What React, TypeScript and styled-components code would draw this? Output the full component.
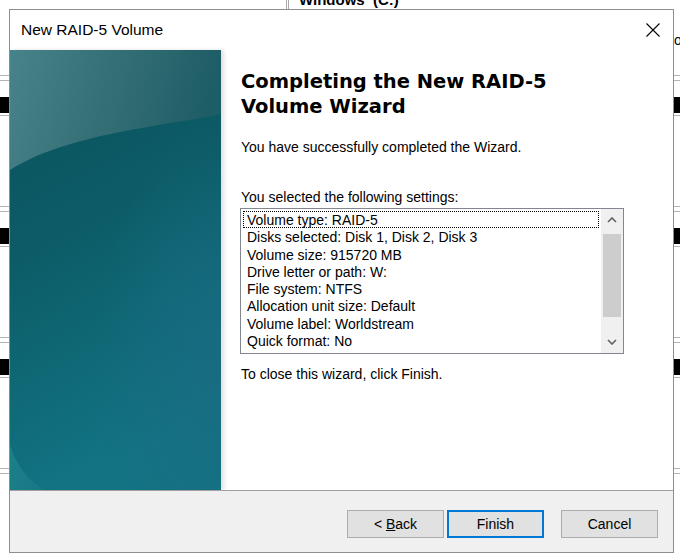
import React from "react";
import styled, { createGlobalStyle } from "styled-components";

const settings = [
  "Volume type: RAID-5",
  "Disks selected: Disk 1, Disk 2, Disk 3",
  "Volume size: 915720 MB",
  "Drive letter or path: W:",
  "File system: NTFS",
  "Allocation unit size: Default",
  "Volume label: Worldstream",
  "Quick format: No",
];

const GlobalStyle = createGlobalStyle`
  body {
    margin: 0;
    background: #ffffff;
    overflow: hidden;
  }
`;

export default function App() {
  return (
    <>
      <GlobalStyle />
      <Desktop>
        <Backdrop>
          <TopStrip>
            <PartitionEdge />
            <PartitionLabel>Windows&nbsp; (C:)</PartitionLabel>
          </TopStrip>
          <StatusLine>on</StatusLine>
          {[0, 1, 2].map((i) => (
            <DiskRow key={i}>
              <DoubleRule />
              <HeaderBar />
              <ThinRule />
            </DiskRow>
          ))}
          <DoubleRule />
        </Backdrop>

        <Window>
          <TitleBar>
            <Title>New RAID-5 Volume</Title>
            <CloseButton aria-label="Close">
              <svg width="14" height="14" viewBox="0 0 14 14">
                <path d="M0.5 0.5 L13.5 13.5 M13.5 0.5 L0.5 13.5" stroke="#000" strokeWidth="1.1" fill="none" />
              </svg>
            </CloseButton>
          </TitleBar>

          <Body>
            <SidePanel>
              <svg width="211" height="440" viewBox="0 0 211 440">
                <defs>
                  <linearGradient id="darkFill" x1="0" y1="0" x2="0.25" y2="1">
                    <stop offset="0" stopColor="#0a515c" />
                    <stop offset="0.45" stopColor="#0c5c67" />
                    <stop offset="1" stopColor="#127483" />
                  </linearGradient>
                  <radialGradient id="blueTint" cx="0.95" cy="0.72" r="0.55">
                    <stop offset="0" stopColor="#1a6a82" stopOpacity="0.75" />
                    <stop offset="1" stopColor="#1a6a82" stopOpacity="0" />
                  </radialGradient>
                  <linearGradient id="lightFill" x1="0" y1="0" x2="1" y2="0.15">
                    <stop offset="0" stopColor="#47838a" />
                    <stop offset="0.5" stopColor="#356f76" />
                    <stop offset="1" stopColor="#1d5d66" />
                  </linearGradient>
                  <linearGradient id="cornerFill" x1="0" y1="0" x2="1" y2="1">
                    <stop offset="0" stopColor="#1c818b" />
                    <stop offset="1" stopColor="#177883" />
                  </linearGradient>
                </defs>
                <rect width="211" height="440" fill="url(#darkFill)" />
                <rect width="211" height="440" fill="url(#blueTint)" />
                <path d="M0 120 C 25 104, 60 92, 110 82 C 150 74, 185 70, 211 64 V0 H0 Z" fill="url(#lightFill)" />
                <path d="M0 395 C 6 415, 18 430, 34 440 H0 Z" fill="url(#cornerFill)" />
              </svg>
            </SidePanel>

            <Content>
              <Heading>
                Completing the New RAID-5
                <br />
                Volume Wizard
              </Heading>
              <Text $gap={20}>You have successfully completed the Wizard.</Text>
              <Text $gap={33}>You selected the following settings:</Text>

              <ListBox>
                <Items>
                  {settings.map((s, i) => (
                    <Item key={s} $focused={i === 0}>
                      {s}
                    </Item>
                  ))}
                </Items>
                <ScrollBar>
                  <ArrowButton>
                    <svg width="10" height="6" viewBox="0 0 10 6">
                      <path d="M1 5 L5 1 L9 5" stroke="#606060" strokeWidth="1.6" fill="none" />
                    </svg>
                  </ArrowButton>
                  <Track>
                    <Thumb />
                  </Track>
                  <ArrowButton>
                    <svg width="10" height="6" viewBox="0 0 10 6">
                      <path d="M1 1 L5 5 L9 1" stroke="#606060" strokeWidth="1.6" fill="none" />
                    </svg>
                  </ArrowButton>
                </ScrollBar>
              </ListBox>

              <Text $gap={12}>To close this wizard, click Finish.</Text>
            </Content>
          </Body>

          <Footer>
            <Button>
              <span>
                &lt;&nbsp;<u>B</u>ack
              </span>
            </Button>
            <Button $primary $gap={3}>
              Finish
            </Button>
            <Button $gap={17}>Cancel</Button>
          </Footer>
        </Window>
      </Desktop>
    </>
  );
}

const Desktop = styled.div`
  position: relative;
  width: 680px;
  height: 559px;
  overflow: hidden;
  background: #ffffff;
  font-family: "Liberation Sans", Arial, sans-serif;
`;

/* disk management window peeking out behind the wizard */
const Backdrop = styled.div`
  display: flex;
  flex-direction: column;
`;

const TopStrip = styled.div`
  display: flex;
  height: 9px;
  overflow: hidden;
`;

const PartitionEdge = styled.div`
  width: 286px;
  border-right: 3px double #a8a8a8;
`;

const PartitionLabel = styled.div`
  margin: -8px 0 0 10px;
  font-size: 15px;
  font-weight: bold;
  line-height: 16px;
  color: #000;
`;

const StatusLine = styled.div`
  height: 66px;
  padding: 23px 0 0 674px;
  box-sizing: border-box;
  font-size: 14px;
  color: #000;
`;

const DiskRow = styled.div`
  display: flex;
  flex-direction: column;
  height: 131px;
`;

const DoubleRule = styled.div`
  height: 4px;
  border-top: 1px solid #b4b4b4;
  border-bottom: 1px solid #b4b4b4;
`;

const HeaderBar = styled.div`
  height: 16px;
  margin-top: 16px;
  background: #000;
`;

const ThinRule = styled.div`
  height: 1px;
  margin-top: 2px;
  background: #b4b4b4;
`;

const Window = styled.div`
  position: absolute;
  left: 9px;
  top: 9px;
  width: 665px;
  height: 544px;
  box-sizing: border-box;
  display: flex;
  flex-direction: column;
  border: 1px solid #8e8e8e;
  background: #ffffff;
`;

const TitleBar = styled.div`
  display: flex;
  align-items: center;
  justify-content: space-between;
  height: 40px;
  padding-left: 11px;
`;

const Title = styled.span`
  font-size: 15.5px;
  color: #000;
`;

const CloseButton = styled.div`
  display: flex;
  align-items: center;
  justify-content: center;
  width: 40px;
  height: 40px;
`;

const Body = styled.div`
  display: flex;
  height: 440px;
`;

const SidePanel = styled.div`
  width: 211px;
  flex-shrink: 0;
  line-height: 0;
  box-shadow: 3px 0 4px rgba(0, 0, 0, 0.12);
`;

const Content = styled.div`
  display: flex;
  flex-direction: column;
  padding: 18px 0 0 20px;
`;

const Heading = styled.div`
  font-family: "DejaVu Sans", Verdana, sans-serif;
  font-weight: bold;
  font-size: 19.5px;
  line-height: 25px;
  margin-top: 1px;
  color: #000;
`;

const Text = styled.div<{ $gap: number }>`
  margin-top: ${({ $gap }) => $gap}px;
  font-size: 14px;
  line-height: 17px;
  color: #000;
`;

const ListBox = styled.div`
  display: flex;
  width: 384px;
  height: 146px;
  box-sizing: border-box;
  margin: 2px 0 0 -1px;
  border: 1px solid #828790;
  background: #fff;
`;

const Items = styled.div`
  flex: 1;
  padding: 2px 2px 0 2px;
`;

const Item = styled.div<{ $focused: boolean }>`
  height: 17.3px;
  box-sizing: border-box;
  padding: 1px 0 0 3px;
  font-size: 14px;
  line-height: 14.3px;
  color: #000;
  white-space: nowrap;
  border: 1px ${({ $focused }) => ($focused ? "dotted #000" : "solid transparent")};
`;

const ScrollBar = styled.div`
  display: flex;
  flex-direction: column;
  width: 22px;
  background: #f0f0f0;
`;

const ArrowButton = styled.div`
  display: flex;
  align-items: center;
  justify-content: center;
  height: 22px;
`;

const Track = styled.div`
  flex: 1;
  padding: 3px 2px 0;
`;

const Thumb = styled.div`
  height: 83px;
  background: #cdcdcd;
`;

const Footer = styled.div`
  display: flex;
  justify-content: flex-end;
  align-items: flex-start;
  flex: 1;
  padding: 19px 15px 0 0;
  border-top: 1px solid #a0a0a0;
  background: #f0f0f0;
`;

const Button = styled.div<{ $primary?: boolean; $gap?: number }>`
  display: flex;
  align-items: center;
  justify-content: center;
  width: 97px;
  height: 28px;
  box-sizing: border-box;
  margin-left: ${({ $gap }) => $gap ?? 0}px;
  border: ${({ $primary }) => ($primary ? "2px solid #0078d7" : "1px solid #adadad")};
  background: #e1e1e1;
  font-size: 14px;
  color: #000;
`;
